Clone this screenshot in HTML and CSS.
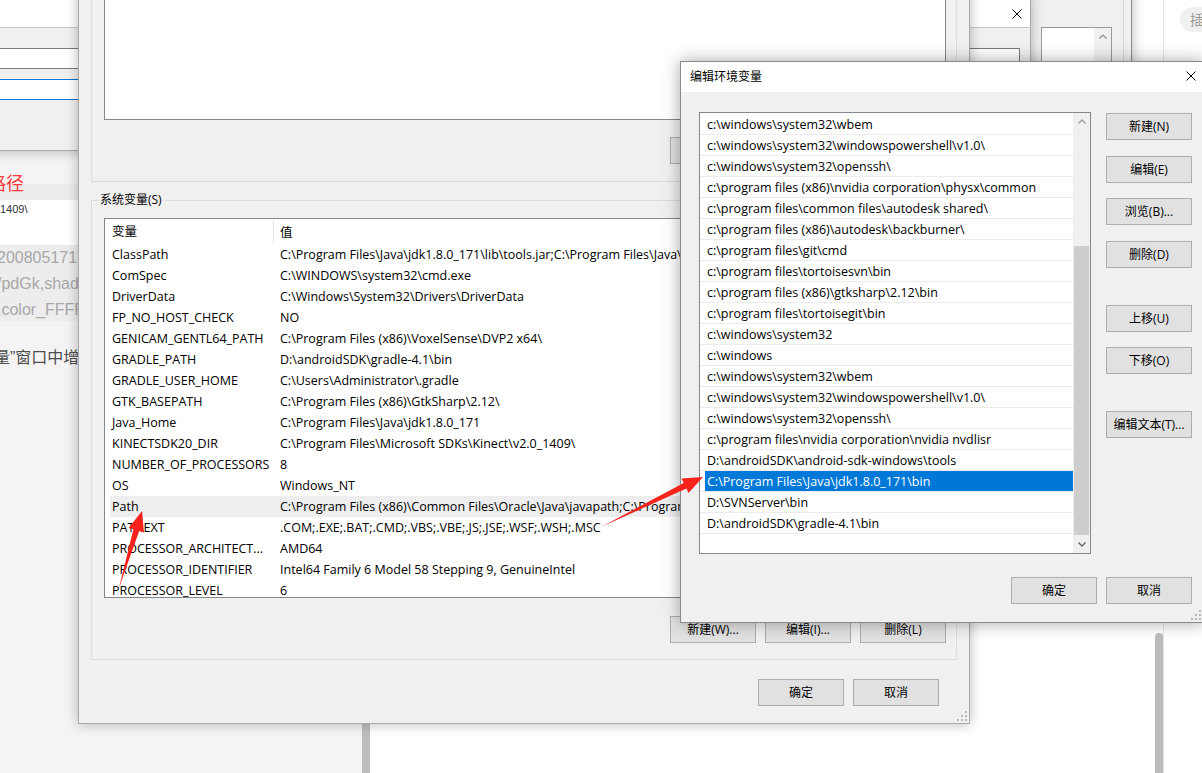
FILE: index.html
```html
<!DOCTYPE html>
<html lang="zh-CN">
<head>
<meta charset="utf-8">
<title>环境变量</title>
<link rel="stylesheet" href="styles.css">
</head>
<body>
<div class="page">
  <div class="pane-left">
    <div class="pl-title">路径</div>
    <div class="pl-code">1409\</div>
    <div class="pl-url">
      <div>200805171</div>
      <div>/pdGk,shad</div>
      <div>,color_FFFF</div>
    </div>
    <p class="pl-text">量”窗口中增</p>
  </div>
  <div class="sb-l"><div class="sb-l-thumb"></div></div>
  <div class="pane-main"></div>
  <div class="sb-r"><div class="sb-r-thumb"></div></div>
  <div class="vline"></div>
  <div class="pane-side"><div class="pill">插</div></div>
</div>

<div class="win win-b">
  <div class="wb-frame">
    <div class="wb-list">
      <div class="wb-items"></div>
      <div class="wb-sb">
        <svg class="chev" width="8" height="5" viewBox="0 0 8 5"><path d="M0.5 4.5 L4 1 L7.5 4.5" fill="none" stroke="#8a8a8a" stroke-width="1.2"/></svg>
      </div>
    </div>
  </div>
</div>

<div class="win win-a">
  <div class="wa-title">
    <span class="wa-caption"></span>
    <svg class="close" width="10" height="10" viewBox="0 0 10 10"><path d="M0.5 0.5 L9.5 9.5 M9.5 0.5 L0.5 9.5" stroke="#000" stroke-width="1"/></svg>
  </div>
  <div class="wa-body">
    <div class="wa-input"></div>
    <div class="wa-input focus"></div>
  </div>
</div>

<div class="win win-main">
  <div class="grp-user">
    <div class="listbox user-list"></div>
    <div class="btn-row">
      <div class="btn">新建(N)...</div>
      <div class="btn">编辑(E)...</div>
      <div class="btn">删除(D)</div>
    </div>
  </div>
  <fieldset class="grp-sys">
    <legend>系统变量(S)</legend>
    <div class="listbox sys-list">
      <div class="lv-head"><div class="col-name">变量</div><div class="col-val">值</div></div>
      <div class="lv-row"><div class="col-name">ClassPath</div><div class="col-val">C:\Program Files\Java\jdk1.8.0_171\lib\tools.jar;C:\Program Files\Java\jdk1.8.0_171\lib\dt.jar</div></div>
      <div class="lv-row"><div class="col-name">ComSpec</div><div class="col-val">C:\WINDOWS\system32\cmd.exe</div></div>
      <div class="lv-row"><div class="col-name">DriverData</div><div class="col-val">C:\Windows\System32\Drivers\DriverData</div></div>
      <div class="lv-row"><div class="col-name">FP_NO_HOST_CHECK</div><div class="col-val">NO</div></div>
      <div class="lv-row"><div class="col-name">GENICAM_GENTL64_PATH</div><div class="col-val">C:\Program Files (x86)\VoxelSense\DVP2 x64\</div></div>
      <div class="lv-row"><div class="col-name">GRADLE_PATH</div><div class="col-val">D:\androidSDK\gradle-4.1\bin</div></div>
      <div class="lv-row"><div class="col-name">GRADLE_USER_HOME</div><div class="col-val">C:\Users\Administrator\.gradle</div></div>
      <div class="lv-row"><div class="col-name">GTK_BASEPATH</div><div class="col-val">C:\Program Files (x86)\GtkSharp\2.12\</div></div>
      <div class="lv-row"><div class="col-name">Java_Home</div><div class="col-val">C:\Program Files\Java\jdk1.8.0_171</div></div>
      <div class="lv-row"><div class="col-name">KINECTSDK20_DIR</div><div class="col-val">C:\Program Files\Microsoft SDKs\Kinect\v2.0_1409\</div></div>
      <div class="lv-row"><div class="col-name">NUMBER_OF_PROCESSORS</div><div class="col-val">8</div></div>
      <div class="lv-row"><div class="col-name">OS</div><div class="col-val">Windows_NT</div></div>
      <div class="lv-row hl"><div class="col-name">Path</div><div class="col-val">C:\Program Files (x86)\Common Files\Oracle\Java\javapath;C:\ProgramData\Oracle\Java\javapath</div></div>
      <div class="lv-row"><div class="col-name">PATHEXT</div><div class="col-val">.COM;.EXE;.BAT;.CMD;.VBS;.VBE;.JS;.JSE;.WSF;.WSH;.MSC</div></div>
      <div class="lv-row"><div class="col-name">PROCESSOR_ARCHITECT...</div><div class="col-val">AMD64</div></div>
      <div class="lv-row"><div class="col-name">PROCESSOR_IDENTIFIER</div><div class="col-val">Intel64 Family 6 Model 58 Stepping 9, GenuineIntel</div></div>
      <div class="lv-row"><div class="col-name">PROCESSOR_LEVEL</div><div class="col-val">6</div></div>
    </div>
    <div class="btn-row sys-btns">
      <div class="btn">新建(W)...</div>
      <div class="btn">编辑(I)...</div>
      <div class="btn">删除(L)</div>
    </div>
  </fieldset>
  <div class="btn-row main-foot">
    <div class="btn">确定</div>
    <div class="btn">取消</div>
  </div>
  <svg class="grip" width="12" height="12" viewBox="0 0 12 12"><g fill="#b9b9b9"><rect x="9" y="1" width="2" height="2"/><rect x="9" y="5" width="2" height="2"/><rect x="5" y="5" width="2" height="2"/><rect x="9" y="9" width="2" height="2"/><rect x="5" y="9" width="2" height="2"/><rect x="1" y="9" width="2" height="2"/></g></svg>
</div>

<div class="win win-edit">
  <div class="we-title">
    <span>编辑环境变量</span>
    <svg class="close" width="10" height="10" viewBox="0 0 10 10"><path d="M0.5 0.5 L9.5 9.5 M9.5 0.5 L0.5 9.5" stroke="#000" stroke-width="1"/></svg>
  </div>
  <div class="we-body">
    <div class="ed-list">
      <div class="ed-items">
        <div class="ed-item"><span>c:\windows\system32\wbem</span></div>
        <div class="ed-item"><span>c:\windows\system32\windowspowershell\v1.0\</span></div>
        <div class="ed-item"><span>c:\windows\system32\openssh\</span></div>
        <div class="ed-item"><span>c:\program files (x86)\nvidia corporation\physx\common</span></div>
        <div class="ed-item"><span>c:\program files\common files\autodesk shared\</span></div>
        <div class="ed-item"><span>c:\program files (x86)\autodesk\backburner\</span></div>
        <div class="ed-item"><span>c:\program files\git\cmd</span></div>
        <div class="ed-item"><span>c:\program files\tortoisesvn\bin</span></div>
        <div class="ed-item"><span>c:\program files (x86)\gtksharp\2.12\bin</span></div>
        <div class="ed-item"><span>c:\program files\tortoisegit\bin</span></div>
        <div class="ed-item"><span>c:\windows\system32</span></div>
        <div class="ed-item"><span>c:\windows</span></div>
        <div class="ed-item"><span>c:\windows\system32\wbem</span></div>
        <div class="ed-item"><span>c:\windows\system32\windowspowershell\v1.0\</span></div>
        <div class="ed-item"><span>c:\windows\system32\openssh\</span></div>
        <div class="ed-item"><span>c:\program files\nvidia corporation\nvidia nvdlisr</span></div>
        <div class="ed-item"><span>D:\androidSDK\android-sdk-windows\tools</span></div>
        <div class="ed-item sel"><span>C:\Program Files\Java\jdk1.8.0_171\bin</span></div>
        <div class="ed-item"><span>D:\SVNServer\bin</span></div>
        <div class="ed-item"><span>D:\androidSDK\gradle-4.1\bin</span></div>
      </div>
      <div class="ed-sb">
        <div class="sb-btn"><svg width="8" height="5" viewBox="0 0 8 5"><path d="M0.5 4.5 L4 1 L7.5 4.5" fill="none" stroke="#9a9a9a" stroke-width="1.3"/></svg></div>
        <div class="sb-track"><div class="sb-thumb"></div></div>
        <div class="sb-btn"><svg width="8" height="5" viewBox="0 0 8 5"><path d="M0.5 0.5 L4 4 L7.5 0.5" fill="none" stroke="#606060" stroke-width="1.3"/></svg></div>
      </div>
    </div>
    <div class="ed-btns">
      <div class="btn">新建(N)</div>
      <div class="btn m16">编辑(E)</div>
      <div class="btn m15">浏览(B)...</div>
      <div class="btn m16">删除(D)</div>
      <div class="btn m37">上移(U)</div>
      <div class="btn m15">下移(O)</div>
      <div class="btn m37">编辑文本(T)...</div>
    </div>
  </div>
  <div class="btn-row edit-foot">
    <div class="btn">确定</div>
    <div class="btn">取消</div>
  </div>
  <svg class="grip" width="12" height="12" viewBox="0 0 12 12"><g fill="#b9b9b9"><rect x="9" y="1" width="2" height="2"/><rect x="9" y="5" width="2" height="2"/><rect x="5" y="5" width="2" height="2"/><rect x="9" y="9" width="2" height="2"/><rect x="5" y="9" width="2" height="2"/><rect x="1" y="9" width="2" height="2"/></g></svg>
</div>

<svg class="arrows" width="1202" height="773" viewBox="0 0 1202 773">
  <polygon fill="#f5231b" points="119,588 133.4,529.3 128.6,527.9 142,511 144,532.5 139.2,531"/>
  <polygon fill="#f5231b" points="601,527 683.7,483.1 681.5,478.6 703,477 688.5,493 686.4,488.5"/>
</svg>
</body>
</html>
```

FILE: styles.css
```css
* { box-sizing: border-box; margin: 0; padding: 0; }
html, body { width: 1202px; height: 773px; overflow: hidden; }
body {
  position: relative;
  font-family: "Open Sans", "Noto Sans CJK SC", sans-serif;
  font-size: 12px;
  color: #000;
  background: #fff;
}

/* ---------- background web page ---------- */
.page { display: flex; height: 773px; }
.pane-left {
  width: 362px;
  background: #f4f4f4;
  padding-top: 174px;
  overflow: hidden;
  font-family: "Liberation Sans", "Noto Sans CJK SC", sans-serif;
}
.pl-title {
  height: 26px;
  margin-left: -12px;
  padding-top: 1px;
  background: linear-gradient(#f4f4f4 0 10px, #ececec 10px);
  color: #fc3b3b;
  font-size: 18px;
  line-height: 18px;
  white-space: nowrap;
}
.pl-code {
  height: 45px;
  background: #fff;
  padding-top: 3px;
  font-size: 11px;
  line-height: 13px;
  color: #333;
}
.pl-url {
  height: 76px;
  margin-left: -3px;
  background: #ededed;
  color: #a8a8a8;
  font-size: 16px;
  line-height: 26px;
  white-space: nowrap;
}
.pl-text {
  margin-top: 25px;
  margin-left: -6px;
  font-size: 16px;
  line-height: 24px;
  color: #4d4d4d;
  white-space: nowrap;
}
.sb-l { width: 8px; background: #f4f4f4; padding-top: 690px; }
.sb-l-thumb { height: 100%; background: #bdbdbd; border-radius: 4px 4px 0 0; }
.pane-main { width: 785px; background: #fff; }
.sb-r { width: 8px; background: #fff; padding-top: 633px; }
.sb-r-thumb { height: 100%; background: #bcbcbc; border-radius: 4px 4px 0 0; }
.vline { width: 1px; background: #e4e4e4; }
.pane-side { width: 38px; background: #fff; padding: 7px 0 0 16px; }
.pill {
  width: 44px;
  height: 25px;
  border-radius: 13px;
  background: #f0f0f0;
  color: #999;
  font-size: 14px;
  line-height: 25px;
  padding-left: 10px;
  white-space: nowrap;
}

/* ---------- windows ---------- */
.win {
  position: absolute;
  background: #f0f0f0;
  border: 1px solid #aaaaaa;
  box-shadow: 0 0 12px rgba(0, 0, 0, 0.28);
}

.win-b {
  left: 1000px;
  top: -10px;
  width: 132px;
  height: 140px;
  border-color: #8c8c8c;
  padding: 4px 7px 0 30px;
}
.wb-frame {
  height: 120px;
  border-right: 1px solid #d6d6d6;
  padding: 32px 11px 0 10px;
}
.wb-list {
  display: flex;
  height: 60px;
  background: #fff;
  border: 1px solid #9a9a9a;
}
.wb-items { flex: 1; }
.wb-sb {
  width: 17px;
  background: #f0f0f0;
  display: flex;
  justify-content: center;
  padding-top: 6px;
}
.chev { display: block; }

.win-a {
  left: -60px;
  top: -5px;
  width: 1091px;
  height: 156px;
}
.wa-title {
  height: 32px;
  background: #fff;
  border-bottom: 1px solid #c8c8c8;
  display: flex;
  align-items: center;
  justify-content: space-between;
  padding: 4px 8px 0 10px;
}
.wa-caption { font-size: 12px; }
.close { display: block; }
.wa-body { padding: 20px 10px 0 40px; }
.wa-input {
  height: 21px;
  background: #fff;
  border: 1px solid #7a7a7a;
}
.wa-input.focus { margin-top: 10px; border-color: #0078d7; }

/* ---------- main dialog ---------- */
.win-main {
  left: 78px;
  top: -40px;
  width: 892px;
  height: 764px;
  padding: 0 12px;
  display: flex;
  flex-direction: column;
}
.grp-user {
  margin-top: 19px;
  border: 1px solid #dcdcdc;
  padding: 10px 10px 17px 12px;
}
.listbox {
  background: #fff;
  border: 1px solid #828790;
}
.user-list { height: 129px; }
.btn-row {
  display: flex;
  justify-content: flex-end;
  gap: 9px;
}
.grp-user .btn-row { margin-top: 17px; }
.btn {
  width: 86px;
  height: 27px;
  background: #e1e1e1;
  border: 1px solid #adadad;
  font-size: 12px;
  line-height: 25px;
  text-align: center;
  white-space: nowrap;
}

.grp-sys {
  margin-top: 10px;
  border: 1px solid #dcdcdc;
  padding: 10px 10px 16px 12px;
  min-width: 0;
}
.grp-sys legend {
  margin-left: -6px;
  padding: 0 2px;
  font-size: 12px;
  line-height: 16px;
}
.sys-list { height: 380px; overflow: hidden; }
.lv-head {
  display: flex;
  height: 25px;
  align-items: center;
  margin-left: 5px;
  font-size: 12.5px;
}
.lv-head .col-name {
  border-right: 1px solid #e5e5e5;
  height: 23px;
  line-height: 23px;
}
.lv-row {
  display: flex;
  height: 21px;
  align-items: center;
  margin-left: 5px;
  font-size: 12.5px;
  line-height: 21px;
  white-space: nowrap;
}
.lv-row.hl { background: #eeeeee; }
.col-name {
  width: 164px;
  flex: none;
  padding: 0 4px 0 2px;
  overflow: hidden;
  white-space: nowrap;
}
.col-val {
  flex: 1;
  padding-left: 6px;
  overflow: hidden;
  white-space: nowrap;
}
.sys-btns { margin-top: 18px; }
.main-foot { margin-top: 19px; padding-right: 18px; }
.grip { position: absolute; right: 1px; bottom: 1px; display: block; }

/* ---------- edit dialog ---------- */
.win-edit {
  left: 680px;
  top: 61px;
  width: 524px;
  height: 562px;
  border-color: #8a8a8a;
  box-shadow: 0 0 16px rgba(0, 0, 0, 0.35);
}
.we-title {
  height: 30px;
  background: #fff;
  display: flex;
  align-items: center;
  justify-content: space-between;
  padding: 0 7px 2px 9px;
  font-size: 12px;
}
.we-body {
  display: flex;
  gap: 15px;
  padding: 20px 11px 0 18px;
}
.ed-list {
  width: 392px;
  height: 442px;
  flex: none;
  display: flex;
  background: #fff;
  border: 1px solid #828790;
}
.ed-items { flex: 1; padding-top: 1px; overflow: hidden; }
.ed-item {
  height: 21px;
  border-bottom: 1px solid #ececec;
  padding-left: 5px;
  font-size: 12.5px;
}
.ed-item span {
  display: block;
  height: 20px;
  line-height: 18px;
  padding: 2px 0 0 2px;
  white-space: nowrap;
}
.ed-item.sel span { background: #0078d7; color: #fff; }
.ed-sb {
  width: 17px;
  background: #f0f0f0;
  display: flex;
  flex-direction: column;
}
.sb-btn {
  height: 17px;
  display: flex;
  align-items: center;
  justify-content: center;
}
.sb-btn svg { display: block; }
.sb-track { flex: 1; padding: 116px 1px 0 1px; }
.sb-thumb { height: 289px; background: #cdcdcd; }
.ed-btns { display: flex; flex-direction: column; padding-top: 1px; }
.m15 { margin-top: 15px; }
.m16 { margin-top: 16px; }
.m37 { margin-top: 37px; }
.edit-foot { margin-top: 23px; padding-right: 11px; }

/* ---------- annotations ---------- */
.arrows { position: absolute; left: 0; top: 0; pointer-events: none; }
```
